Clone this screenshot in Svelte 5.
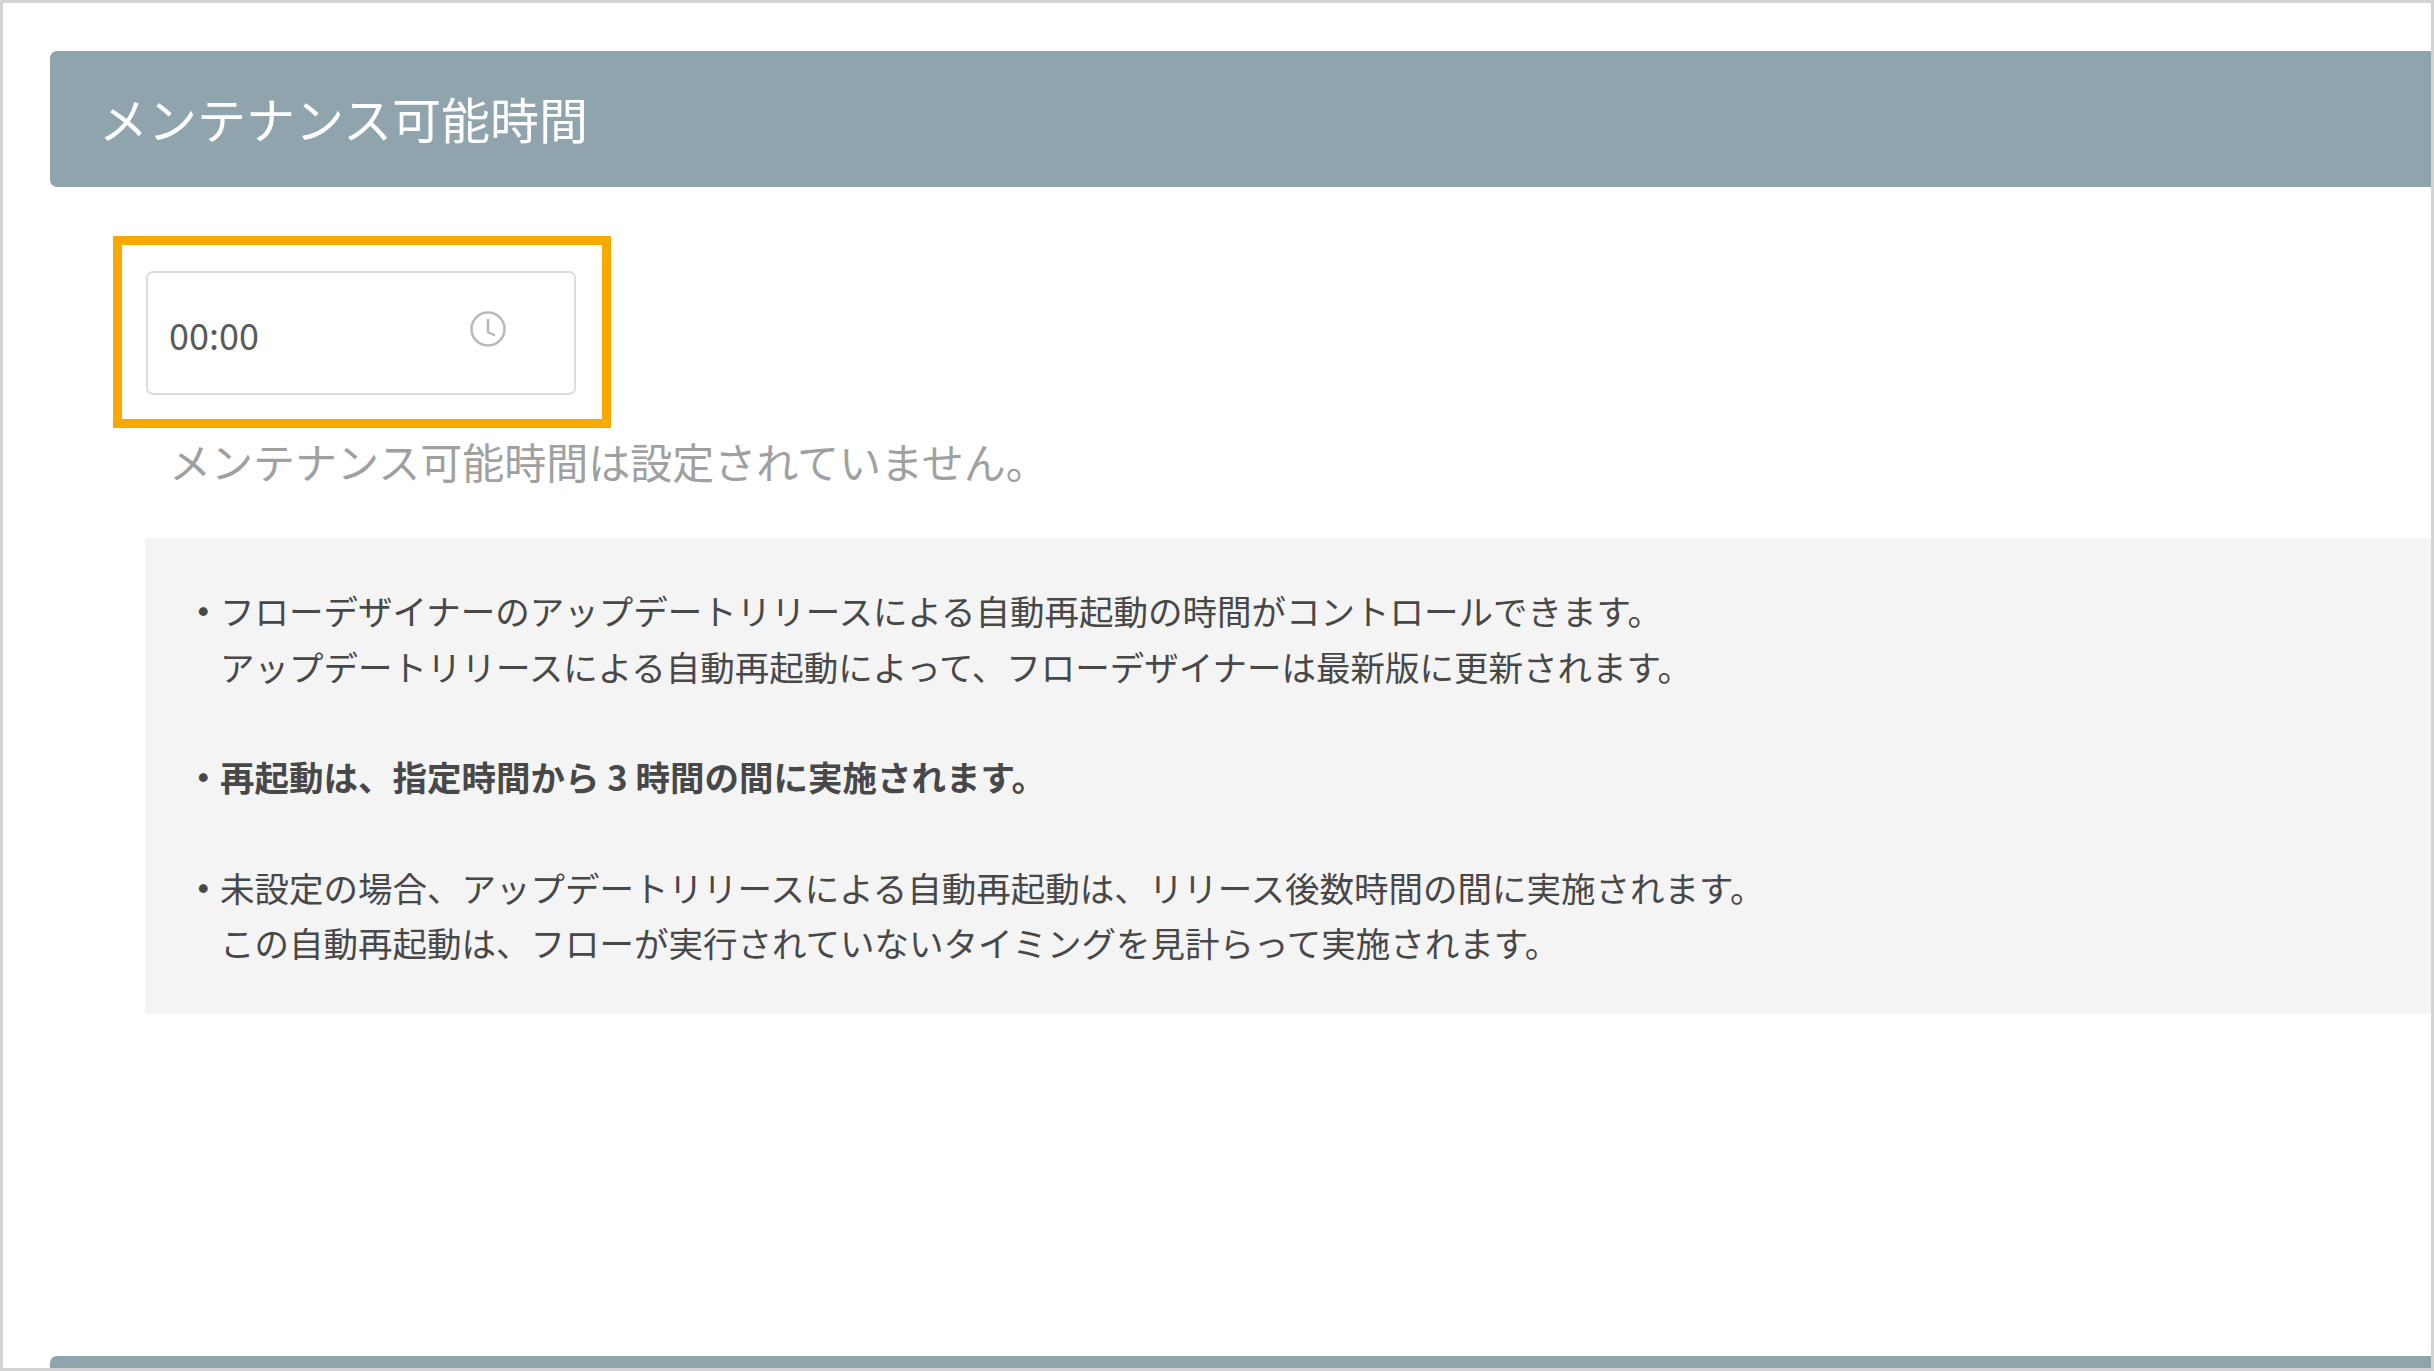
<script>
  const notes = [
    { lines: ['フローデザイナーのアップデートリリースによる自動再起動の時間がコントロールできます。', 'アップデートリリースによる自動再起動によって、フローデザイナーは最新版に更新されます。'] },
    { lines: ['再起動は、指定時間から 3 時間の間に実施されます。'], bold: true },
    { lines: ['未設定の場合、アップデートリリースによる自動再起動は、リリース後数時間の間に実施されます。', 'この自動再起動は、フローが実行されていないタイミングを見計らって実施されます。'] }
  ];
</script>

<div class="frame">
  <h2 class="bar title">メンテナンス可能時間</h2>
  <div class="section">
    <div class="highlight">
      <div class="input">
        <span class="value">00:00</span>
        <svg class="clock" viewBox="0 0 36 36" width="36" height="36" aria-hidden="true">
          <circle cx="18" cy="18" r="16.5" />
          <path d="M18 8 V21 L25 24.5" />
        </svg>
      </div>
    </div>
    <p class="status">メンテナンス可能時間は設定されていません。</p>
    <div class="panel">
      {#each notes as note}
        <p class="note" class:bold={note.bold}>
          <span class="mark">・</span>{#each note.lines as line, i}{#if i > 0}<br />{/if}{line}{/each}
        </p>
      {/each}
    </div>
  </div>
  <div class="bar footer"></div>
</div>

<style>
  :global(body) {
    margin: 0;
    background: #fff;
  }
  .frame {
    width: 2434px;
    height: 1371px;
    box-sizing: border-box;
    border: 3px solid #d2d2d2;
    overflow: hidden;
    padding-top: 48px;
    font-family: "Noto Sans CJK JP", "Noto Sans", sans-serif;
    background: #fff;
  }
  .bar {
    margin: 0 0 0 47px;
    background: #90a4ad;
    border-radius: 7px 0 0 7px;
  }
  .title {
    height: 136px;
    box-sizing: border-box;
    padding: 0 0 0 49px;
    font-size: 49px;
    font-weight: 400;
    line-height: 133px;
    color: #fff;
  }
  .section {
    margin-left: 110px;
    height: 1169px;
    padding-top: 49px;
    box-sizing: border-box;
  }
  .highlight {
    width: 498px;
    height: 192px;
    box-sizing: border-box;
    border: 9px solid #f7a900;
    padding: 26px 24px;
  }
  .input {
    width: 430px;
    height: 124px;
    box-sizing: border-box;
    border: 2px solid #dcdcdc;
    border-radius: 7px;
    display: flex;
    align-items: center;
    justify-content: space-between;
    padding: 0 68px 0 21px;
  }
  .value {
    font-size: 36px;
    color: #5a5a5a;
    padding-top: 2px;
  }
  .clock {
    margin-top: -8px;
    fill: none;
    stroke: #b9b9b9;
    stroke-width: 2.5;
  }
  .status {
    margin: 5px 0 0 56px;
    font-size: 42px;
    line-height: 56px;
    color: #a0a0a0;
  }
  .panel {
    margin: 49px 0 0 32px;
    height: 476px;
    box-sizing: border-box;
    padding: 45px 0 0 41px;
    background: #f4f4f4;
    font-size: 34.5px;
    line-height: 55.5px;
    color: #484848;
  }
  .note {
    margin: 0 0 55px;
    padding-left: 34px;
    white-space: nowrap;
    position: relative;
  }
  .mark {
    position: absolute;
    left: 0;
    top: 0;
    font-weight: 700;
  }
  .bold {
    font-weight: 700;
  }
  .footer {
    height: 30px;
    margin-top: 0;
  }
</style>
